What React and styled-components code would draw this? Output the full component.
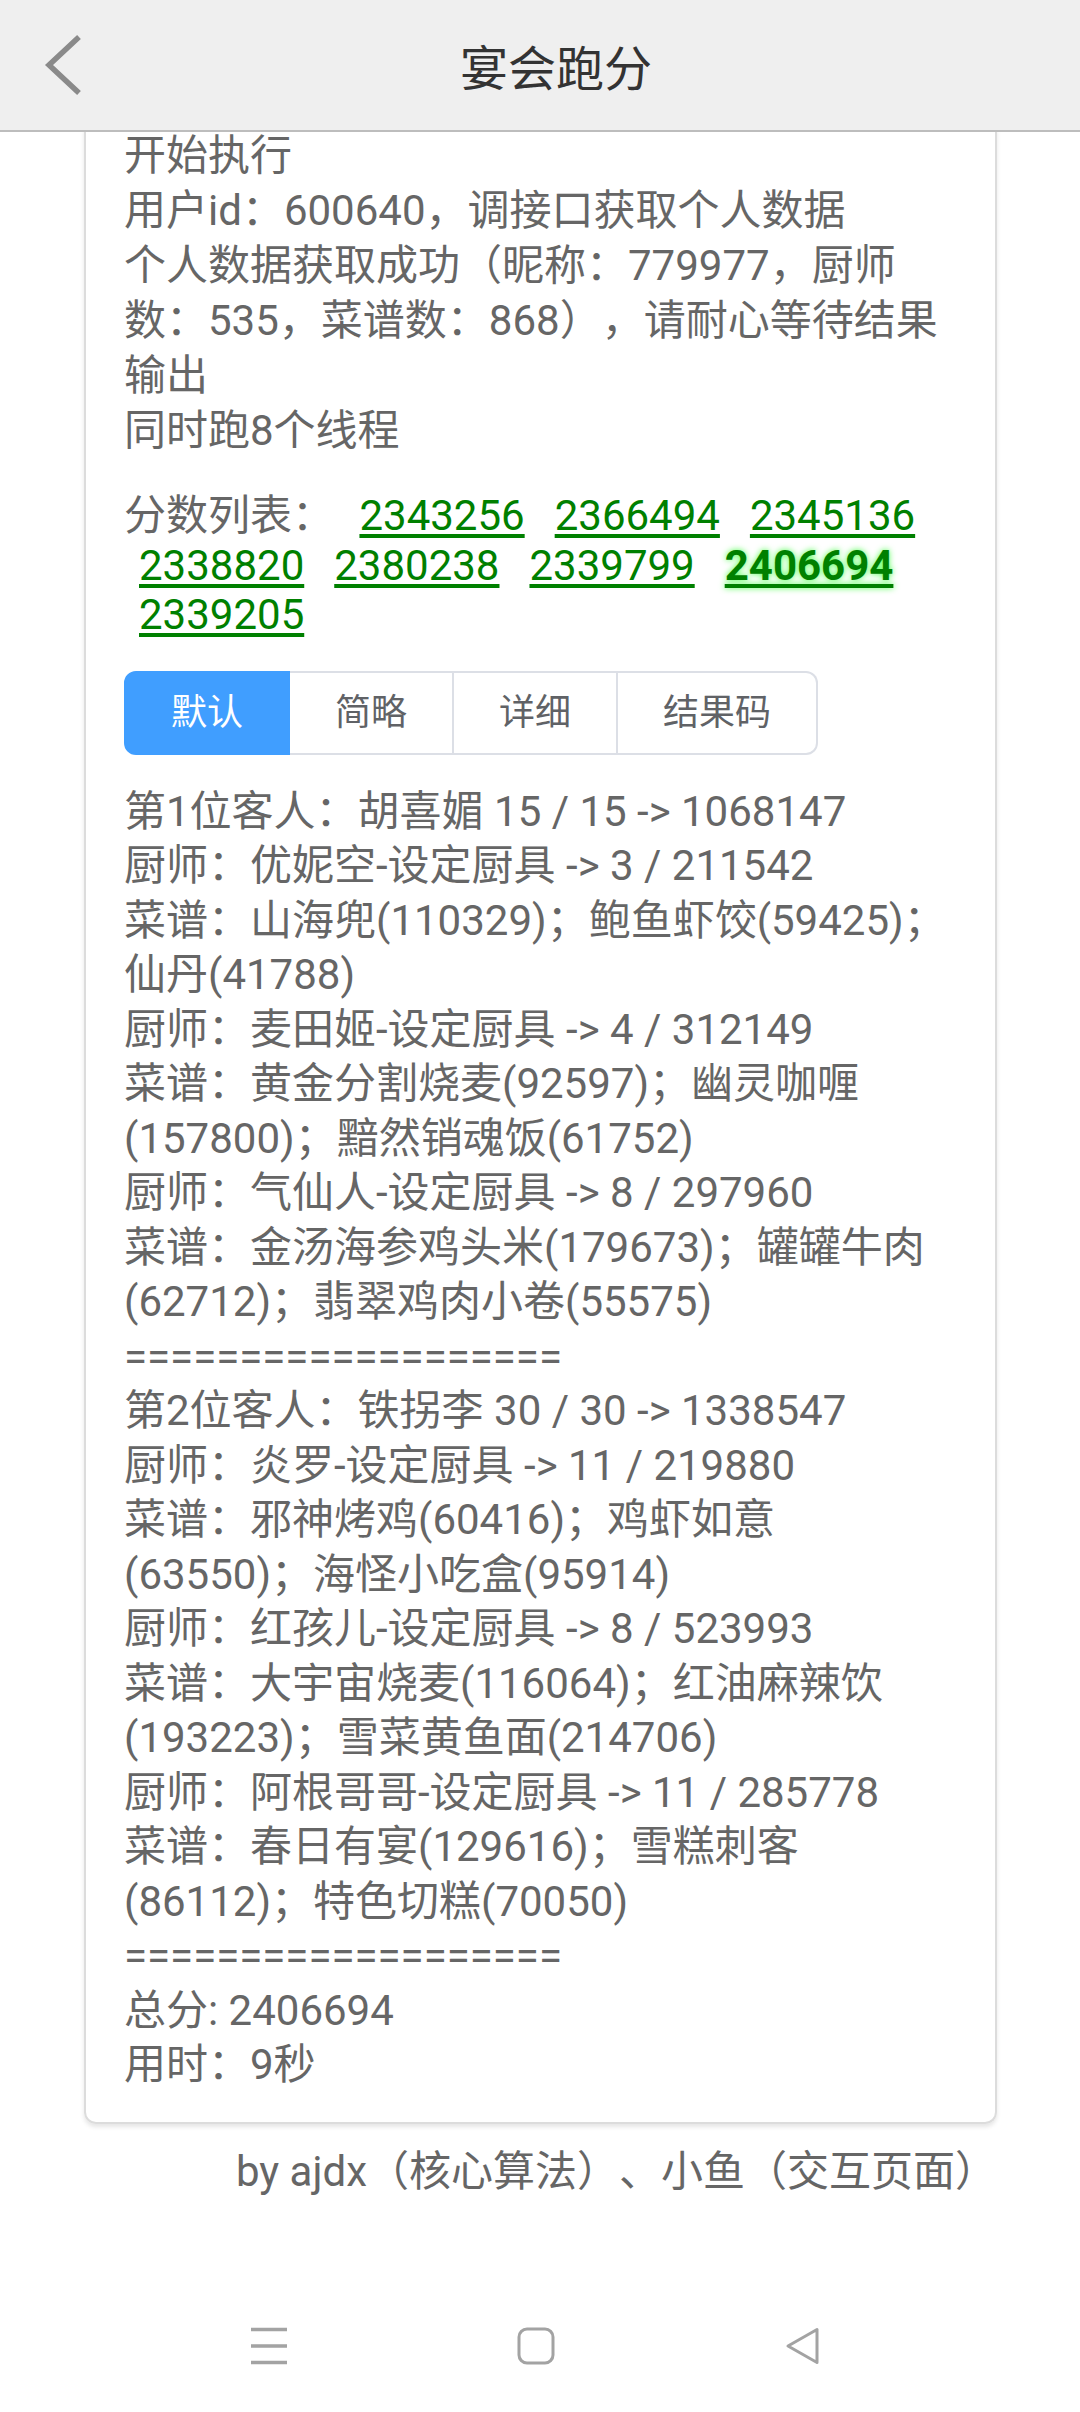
import React from 'react';
import styled, { createGlobalStyle } from 'styled-components';

const GlobalStyle = createGlobalStyle`
  html, body {
    margin: 0;
    padding: 0;
    background: #fff;
  }
  body {
    font-family: Roboto, "Noto Sans CJK SC", sans-serif;
    text-spacing-trim: space-all;
  }
`;

const Screen = styled.div`
  min-height: 100vh;
  display: flex;
  flex-direction: column;
  background: #fff;
`;

const Header = styled.header`
  position: relative;
  z-index: 2;
  height: 130px;
  display: grid;
  grid-template-columns: 1fr auto 1fr;
  align-items: center;
  background: #efefef;
  border-bottom: 2px solid #bdbdbd;
`;

const BackButton = styled.button`
  justify-self: start;
  margin-left: 43px;
  padding: 0;
  border: 0;
  background: none;
  display: flex;
`;

const Title = styled.h1`
  margin: 0 0 0 32px;
  font-size: 48px;
  font-weight: normal;
  color: #333;
`;

const Card = styled.section`
  margin: -4px 83px 0 84px;
  padding: 0 40px 29px 38px;
  border: 2px solid #dcdcdc;
  border-top: none;
  border-radius: 0 0 12px 12px;
  box-shadow: 0 3px 4px rgba(0, 0, 0, 0.1);
  color: #666;
  font-size: 42px;
`;

const Log = styled.div`
  line-height: 55px;
`;

const Scores = styled.div`
  margin-top: 33px;
  line-height: 49.5px;
`;

const ScoreLink = styled.a`
  display: inline-block;
  margin: 0 15px;
  color: #008000;
  font-weight: ${({ $best }) => ($best ? 'bold' : 'normal')};
  text-decoration: underline;
  text-decoration-thickness: 4px;
  text-underline-offset: 4px;
  text-shadow: ${({ $best }) => ($best ? '0 0 6px #4cff4c' : 'none')};
`;

const Segments = styled.div`
  margin-top: 31px;
  display: inline-flex;
  vertical-align: top;
`;

const Segment = styled.button`
  padding: 22px 45px;
  font-family: inherit;
  font-size: 36px;
  line-height: 36px;
  color: ${({ $active }) => ($active ? '#fff' : '#606266')};
  background: ${({ $active }) => ($active ? '#409eff' : '#fff')};
  border: 2px solid ${({ $active }) => ($active ? '#409eff' : '#dcdfe6')};
  border-left-width: ${({ $first }) => ($first ? '2px' : '0')};
  border-radius: ${({ $first, $last }) =>
    $first ? '12px 0 0 12px' : $last ? '0 12px 12px 0' : '0'};
`;

const Result = styled.div`
  margin-top: 30px;
  line-height: 54.5px;
`;

const Footer = styled.p`
  margin: 20px 83px 0 0;
  text-align: right;
  font-size: 42px;
  line-height: 55px;
  color: #666;
`;

const Spacer = styled.div`
  flex: 1;
`;

const NavBar = styled.nav`
  height: 132px;
  padding-right: 8px;
  display: flex;
  align-items: center;
  justify-content: center;
  gap: 229px;
  color: #a3a3a3;
`;

const BackIcon = () => (
  <svg width="40" height="62" viewBox="0 0 40 62">
    <polyline points="36,3 6,31 36,59" fill="none" stroke="#8a8a8a" strokeWidth="5.5" />
  </svg>
);

const MenuIcon = () => (
  <svg width="38" height="38" viewBox="0 0 38 38">
    <path d="M1 2.5h36M1 19h36M1 35.5h36" stroke="currentColor" strokeWidth="3.5" />
  </svg>
);

const HomeIcon = () => (
  <svg width="38" height="38" viewBox="0 0 38 38">
    <rect x="2" y="2" width="34" height="34" rx="8" fill="none" stroke="currentColor" strokeWidth="3" />
  </svg>
);

const BackNavIcon = () => (
  <svg width="38" height="38" viewBox="0 0 38 38">
    <path d="M33 2.5v33L4 19z" fill="none" stroke="currentColor" strokeWidth="3" strokeLinejoin="round" />
  </svg>
);

const logLines = [
  '开始执行',
  '用户id：600640，调接口获取个人数据',
  '个人数据获取成功（昵称：779977，厨师数：535，菜谱数：868），请耐心等待结果输出',
  '同时跑8个线程',
];

const scores = [2343256, 2366494, 2345136, 2338820, 2380238, 2339799, 2406694, 2339205];
const best = Math.max(...scores);

const tabs = ['默认', '简略', '详细', '结果码'];

const guests = [
  {
    head: '第1位客人：胡喜媚 15 / 15 -> 1068147',
    chefs: [
      ['厨师：优妮空-设定厨具 -> 3 / 211542', '菜谱：山海兜(110329)；鲍鱼虾饺(59425)；仙丹(41788)'],
      ['厨师：麦田姬-设定厨具 -> 4 / 312149', '菜谱：黄金分割烧麦(92597)；幽灵咖喱(157800)；黯然销魂饭(61752)'],
      ['厨师：气仙人-设定厨具 -> 8 / 297960', '菜谱：金汤海参鸡头米(179673)；罐罐牛肉(62712)；翡翠鸡肉小卷(55575)'],
    ],
  },
  {
    head: '第2位客人：铁拐李 30 / 30 -> 1338547',
    chefs: [
      ['厨师：炎罗-设定厨具 -> 11 / 219880', '菜谱：邪神烤鸡(60416)；鸡虾如意(63550)；海怪小吃盒(95914)'],
      ['厨师：红孩儿-设定厨具 -> 8 / 523993', '菜谱：大宇宙烧麦(116064)；红油麻辣饮(193223)；雪菜黄鱼面(214706)'],
      ['厨师：阿根哥哥-设定厨具 -> 11 / 285778', '菜谱：春日有宴(129616)；雪糕刺客(86112)；特色切糕(70050)'],
    ],
  },
];

const divider = '===================';

export default function App() {
  return (
    <Screen>
      <GlobalStyle />
      <Header>
        <BackButton aria-label="返回">
          <BackIcon />
        </BackButton>
        <Title>宴会跑分</Title>
      </Header>

      <Card>
        <Log>
          {logLines.map((line) => (
            <div key={line}>{line}</div>
          ))}
        </Log>

        <Scores>
          分数列表：{' '}
          {scores.map((s) => (
            <ScoreLink key={s} href="#" $best={s === best}>
              {s}
            </ScoreLink>
          ))}
        </Scores>

        <Segments>
          {tabs.map((t, i) => (
            <Segment key={t} $active={i === 0} $first={i === 0} $last={i === tabs.length - 1}>
              {t}
            </Segment>
          ))}
        </Segments>

        <Result>
          {guests.map((g) => (
            <React.Fragment key={g.head}>
              <div>{g.head}</div>
              {g.chefs.map(([chef, dishes]) => (
                <React.Fragment key={chef}>
                  <div>{chef}</div>
                  <div>{dishes}</div>
                </React.Fragment>
              ))}
              <div>{divider}</div>
            </React.Fragment>
          ))}
          <div>总分: {best}</div>
          <div>用时：9秒</div>
        </Result>
      </Card>

      <Footer>by ajdx（核心算法）、小鱼（交互页面）</Footer>

      <Spacer />
      <NavBar>
        <MenuIcon />
        <HomeIcon />
        <BackNavIcon />
      </NavBar>
    </Screen>
  );
}
